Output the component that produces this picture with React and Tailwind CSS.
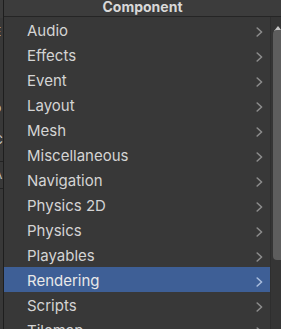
const items = [
  'Audio',
  'Effects',
  'Event',
  'Layout',
  'Mesh',
  'Miscellaneous',
  'Navigation',
  'Physics 2D',
  'Physics',
  'Playables',
  'Rendering',
  'Scripts',
  'Tilemap',
];

function Chevron({ active }) {
  return (
    <svg width="7" height="10" viewBox="0 0 7 10" fill="none" className="shrink-0">
      <path
        d="M1.2 1 L5.6 5 L1.2 9"
        stroke={active ? '#a9bddd' : '#8c8c8c'}
        strokeWidth="1.6"
        strokeLinecap="round"
        strokeLinejoin="round"
      />
    </svg>
  );
}

export default function App() {
  return (
    <div
      className="flex h-[329px] w-[281px] overflow-hidden bg-[#383838] text-[#d4d4d4]"
      style={{ fontFamily: 'Inter, "Noto Sans", sans-serif' }}
    >
      {/* bit of the panel behind the popup */}
      <div className="relative w-[3px] shrink-0 overflow-hidden bg-[#383838] text-[12px] leading-none text-[#c8c8c8]">
        <div className="h-[18px] bg-[#3c3c3c]" />
        <div className="absolute left-[-6px] top-[26px]">E</div>
        <div className="absolute left-[-6px] top-[102px]">b</div>
        <div className="absolute left-[-6px] top-[134px]">C</div>
        <div className="absolute left-0 top-[161px] h-px w-full bg-[#232323]" />
        <div className="absolute left-[-6px] top-[169px]">A</div>
        <div className="absolute left-0 top-[188px] h-px w-full bg-[#232323]" />
      </div>
      <div className="w-px shrink-0 bg-[#1e1e1e]" />

      <div className="flex min-w-0 flex-1 flex-col">
        <div className="flex h-[17px] shrink-0 items-center justify-center border-b border-[#252525] bg-[#3c3c3c] pb-[3px] text-[14px] font-bold text-[#d8d8d8]">
          Component
        </div>
        <div className="flex flex-1">
          <div className="flex flex-1 flex-col">
            {items.map((item) => {
              const active = item === 'Rendering';
              return (
                <div
                  key={item}
                  className={`flex h-[25px] shrink-0 items-center justify-between pl-[23px] pr-[7px] pt-[4px] text-[15px] ${
                    active ? 'bg-[#3e5f96] text-[#e8e8e8]' : ''
                  }`}
                >
                  <span>{item}</span>
                  <Chevron active={active} />
                </div>
              );
            })}
          </div>
          <div className="relative w-[11px] shrink-0 border-l border-[#2e2e2e] bg-[#353535]">
            <div className="absolute left-[3px] top-[9px] h-0 w-0 border-x-[4px] border-b-[5px] border-x-transparent border-b-[#c4c4c4]" />
            <div className="absolute left-[2px] top-[13px] h-[230px] w-[12px] rounded-[4px] bg-[#5d5d5d]" />
          </div>
        </div>
      </div>
    </div>
  );
}
